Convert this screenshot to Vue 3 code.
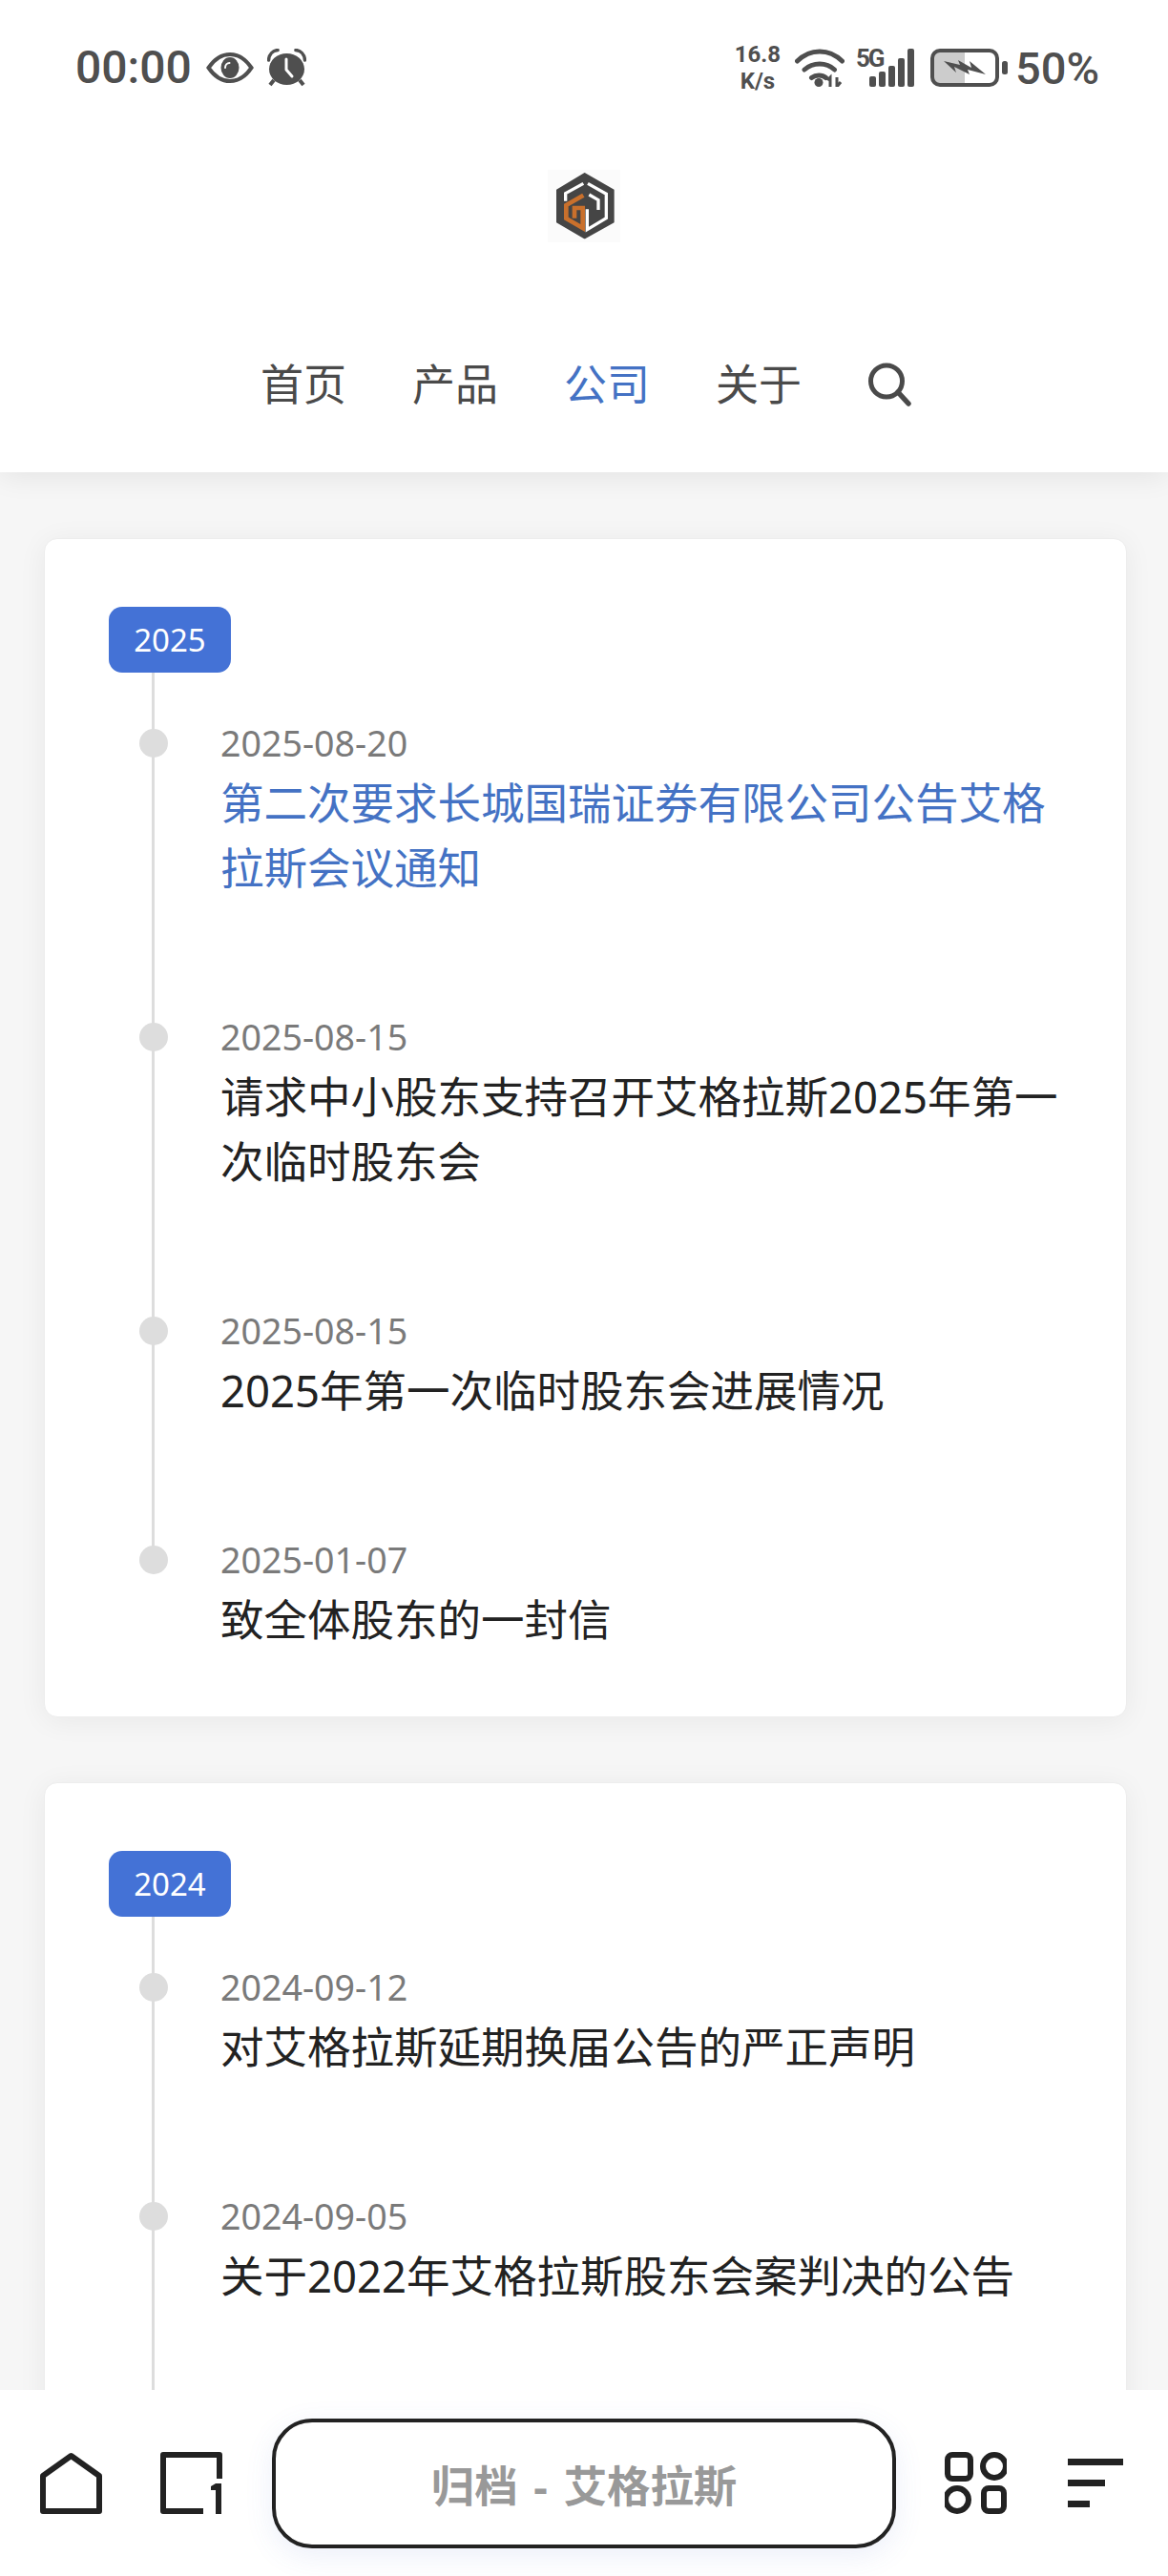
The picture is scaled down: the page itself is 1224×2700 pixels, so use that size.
<template>
  <div class="page">
    <header class="header">
      <div class="status">
        <div class="status-left">
          <span class="time">00:00</span>
          <svg class="eye" viewBox="0 0 50 32">
            <path d="M2.500 16C10 5 18 2 25 2s15 3 22.500 14C40 27 32 30 25 30S10 27 2.500 16Z" fill="none" stroke="#4f4f4f" stroke-width="4" />
            <ellipse cx="25" cy="16" rx="9.500" ry="11" fill="#4f4f4f" />
            <path d="M20 16c0-3 2-5 4.500-5" fill="none" stroke="#fff" stroke-width="2" stroke-linecap="round" />
          </svg>
          <svg class="alarm" viewBox="0 0 41 40">
            <ellipse cx="20.500" cy="21.500" rx="18.500" ry="16.500" fill="#4f4f4f" />
            <path d="M20 11v11l6 7" fill="none" stroke="#fff" stroke-width="3" stroke-linecap="round" stroke-linejoin="round" />
            <path d="M1.500 12C2 6 6 2 11 1.500M39.500 12C39 6 35 2 30 1.500" fill="none" stroke="#4f4f4f" stroke-width="3.500" stroke-linecap="round" />
            <path d="M7 33l-4 5M34 33l4 5" fill="none" stroke="#4f4f4f" stroke-width="4" />
          </svg>
        </div>
        <div class="status-right">
          <div class="speed">16.8<br />K/s</div>
          <svg class="wifi" viewBox="0 0 52 40">
            <path d="M2.500 13C16-.5 36-.5 49.500 13M10 22c9-8 23-8 31.500 0M17.500 30.500c4.500-3.500 11-3.500 15 0" fill="none" stroke="#4f4f4f" stroke-width="5" stroke-linecap="round" />
            <circle cx="25" cy="35.500" r="4.500" fill="#4f4f4f" />
            <path d="M37 40V30l-3 3M44 30v10l4-5" fill="none" stroke="#4f4f4f" stroke-width="3" />
          </svg>
          <div class="signal">
            <span class="five-g">5G</span>
            <svg class="bars" viewBox="0 0 47 40">
              <rect v-for="bar in signalBars" :key="bar.x" :x="bar.x" :y="bar.y" width="7" :height="40 - bar.y" rx="2" fill="#4f4f4f" />
            </svg>
          </div>
          <svg class="battery" viewBox="0 0 81 40">
            <path d="M8 3h28v34H8a6 6 0 0 1-6-6V9a6 6 0 0 1 6-6Z" fill="#cccccc" />
            <rect x="2" y="2" width="68" height="36" rx="8" fill="none" stroke="#4f4f4f" stroke-width="4" />
            <rect x="75" y="13" width="6" height="14" rx="2.500" fill="#4f4f4f" />
            <polygon points="14,13 31,17 29,12 43,20 41,13 58,27 39,22 41,27 25,19 27,25" fill="#4f4f4f" />
          </svg>
          <span class="percent">50%</span>
        </div>
      </div>

      <div class="logo">
        <svg viewBox="0 0 240 240" width="80" height="80">
          <rect x="6" y="6" width="228" height="228" fill="#fbfbfb" />
          <path d="M122 18L212 70V170L122 220L36 170V70Z" fill="#454545" stroke="#454545" stroke-width="6" stroke-linejoin="round" />
          <path d="M62 104V80L118 49M132 49L190 82V158L130 194V130M136 84L165 101V132" fill="none" stroke="#fff" stroke-width="10" />
          <path d="M118 86L64 117V159L116 189V126H90V158" fill="none" stroke="#c9702c" stroke-width="14" />
        </svg>
      </div>

      <nav class="nav">
        <a v-for="link in links" :key="link.label" class="nav-link" :class="{ active: link.active }">{{ link.label }}</a>
        <svg class="search" viewBox="0 0 46 46">
          <circle cx="20" cy="19.500" r="16.500" fill="none" stroke="#4a4a4a" stroke-width="5" />
          <path d="M32 31l11 12" fill="none" stroke="#4a4a4a" stroke-width="5.500" stroke-linecap="round" />
        </svg>
      </nav>
    </header>

    <main class="main">
      <section v-for="group in archive" :key="group.year" class="card">
        <div class="year">{{ group.year }}</div>
        <ul class="list" :class="{ cut: group.cut }">
          <li v-for="post in group.posts" :key="post.title" class="item">
            <span class="dot" />
            <div class="date">{{ post.date }}</div>
            <div class="title" :class="{ active: post.active }">{{ post.title }}</div>
          </li>
        </ul>
      </section>
    </main>

    <footer class="bar">
      <svg class="bar-icon" viewBox="0 0 65 65">
        <path d="M32.500 4L62 25v37H3V25Z" fill="none" stroke="#222" stroke-width="6" stroke-linejoin="round" />
      </svg>
      <svg class="bar-icon doc" viewBox="0 0 65 65">
        <path d="M62 28V3H3v59h42" fill="none" stroke="#222" stroke-width="6" stroke-linejoin="round" />
        <path d="M58 33h6v32h-6V40h-5v-4Z" fill="#222" />
      </svg>
      <div class="pill">归档 - 艾格拉斯</div>
      <svg class="bar-icon grid" viewBox="0 0 65 65">
        <rect x="3" y="3" width="24" height="25" rx="5" fill="none" stroke="#222" stroke-width="6" />
        <circle cx="52" cy="15" r="12" fill="none" stroke="#222" stroke-width="6" />
        <circle cx="13" cy="50" r="12" fill="none" stroke="#222" stroke-width="6" />
        <rect x="41" y="38" width="21" height="24" rx="5" fill="none" stroke="#222" stroke-width="6" />
      </svg>
      <div class="menu">
        <span class="menu-long" />
        <span class="menu-mid" />
        <span class="menu-short" />
      </div>
    </footer>
  </div>
</template>

<script setup>
const links = [
  { label: '首页' },
  { label: '产品' },
  { label: '公司', active: true },
  { label: '关于' },
]

const signalBars = [
  { x: 0, y: 29 },
  { x: 10, y: 24 },
  { x: 20, y: 18 },
  { x: 30, y: 10 },
  { x: 40, y: 0 },
]

const archive = [
  {
    year: 2025,
    posts: [
      { date: '2025-08-20', title: '第二次要求长城国瑞证券有限公司公告艾格拉斯会议通知', active: true },
      { date: '2025-08-15', title: '请求中小股东支持召开艾格拉斯2025年第一次临时股东会' },
      { date: '2025-08-15', title: '2025年第一次临时股东会进展情况' },
      { date: '2025-01-07', title: '致全体股东的一封信' },
    ],
  },
  {
    year: 2024,
    cut: true,
    posts: [
      { date: '2024-09-12', title: '对艾格拉斯延期换届公告的严正声明' },
      { date: '2024-09-05', title: '关于2022年艾格拉斯股东会案判决的公告' },
    ],
  },
]
</script>

<style>
html,
body {
  background: #f6f6f6;
  margin: 0;
}
</style>

<style scoped>
* {
  box-sizing: border-box;
}

.page {
  background: #f6f6f6;
  color: #222;
  font-family: 'Noto Sans', 'Noto Sans CJK SC', sans-serif;
  height: 2700px;
  overflow: hidden;
  position: relative;
  width: 1224px;
}

.header {
  background: #fff;
  box-shadow: 0 2px 30px rgba(0, 0, 0, 0.09);
  height: 495px;
  position: relative;
}

.status {
  align-items: center;
  color: #4f4f4f;
  display: flex;
  font-family: Roboto, sans-serif;
  font-weight: 500;
  height: 142px;
  justify-content: space-between;
  padding: 0 72px 0 79px;
}

.status-left,
.status-right {
  align-items: center;
  display: flex;
}

.time {
  font-size: 48px;
  line-height: 1;
}

.eye {
  height: 32px;
  margin-left: 15px;
  width: 50px;
}

.alarm {
  height: 40px;
  margin-left: 14px;
  width: 41px;
}

.speed {
  font-size: 24px;
  font-weight: 700;
  line-height: 28px;
  text-align: center;
  width: 52px;
}

.wifi {
  height: 40px;
  margin-left: 13px;
  width: 52px;
}

.signal {
  height: 40px;
  margin-left: 12px;
  position: relative;
  width: 61px;
}

.five-g {
  font-size: 26px;
  font-weight: 700;
  left: 0;
  letter-spacing: -2px;
  line-height: 20px;
  position: absolute;
  top: 0;
}

.bars {
  bottom: 0;
  height: 40px;
  position: absolute;
  right: 0;
  width: 47px;
}

.battery {
  height: 40px;
  margin-left: 17px;
  width: 81px;
}

.percent {
  font-size: 47px;
  line-height: 1;
  margin-left: 8px;
}

.logo {
  display: flex;
  justify-content: center;
  margin-top: 34px;
}

.nav {
  align-items: center;
  display: flex;
  gap: 69px;
  justify-content: center;
  margin-top: 114px;
  padding-left: 4px;
}

.nav-link {
  color: #4a4a4a;
  font-size: 45px;
  line-height: 66px;
}

.nav-link.active {
  color: #4472c4;
}

.search {
  height: 46px;
  width: 46px;
}

.main {
  display: flex;
  flex-direction: column;
  gap: 68px;
  padding: 69px 43px 0 46px;
}

.card {
  background: #fff;
  border: 1px solid #ededed;
  border-radius: 14px;
  box-shadow: 0 4px 30px rgba(0, 0, 0, 0.06);
  padding: 71px 67px 68px;
}

.year {
  background: #4472d6;
  border-radius: 14px;
  color: #fff;
  font-size: 33px;
  height: 69px;
  line-height: 69px;
  text-align: center;
  width: 128px;
}

.list {
  list-style: none;
  margin: 0;
  padding: 48px 0 0;
  position: relative;
}

/* Rail joining the year badge to the last dot. */
.list::before {
  background: #ddd;
  bottom: 96px;
  content: '';
  left: 45px;
  position: absolute;
  top: 0;
  width: 3px;
}

.list.cut::before {
  bottom: 0;
}

.list.cut {
  padding-bottom: 300px;
}

.item {
  padding: 0 0 118px 117px;
  position: relative;
}

.item:last-child {
  padding-bottom: 0;
}

.dot {
  background: #ddd;
  border-radius: 50%;
  height: 30px;
  left: 32px;
  position: absolute;
  top: 11px;
  width: 30px;
}

.date {
  color: #7a7a7a;
  font-size: 37.600px;
  line-height: 52px;
}

.title {
  color: #222;
  font-size: 45.500px;
  line-height: 68px;
  margin-top: 2px;
}

.title.active {
  color: #4472c4;
}

.bar {
  align-items: center;
  background: #fff;
  bottom: 0;
  display: flex;
  height: 195px;
  left: 0;
  padding: 0 48px 0 42px;
  position: absolute;
  right: 0;
}

.bar-icon {
  flex: none;
  height: 65px;
  width: 65px;
}

.doc {
  margin-left: 61px;
}

.pill {
  align-items: center;
  background: #fff;
  border: 4px solid #222;
  border-radius: 42px;
  box-shadow: 0 8px 30px rgba(70, 100, 200, 0.1);
  color: #999;
  display: flex;
  flex: none;
  font-size: 45.400px;
  font-weight: 700;
  height: 136px;
  justify-content: center;
  margin-left: 52px;
  white-space: pre;
  width: 654px;
  word-spacing: 5px;
}

.grid {
  margin-left: 51px;
}

.menu {
  display: flex;
  flex-direction: column;
  gap: 15px;
  margin-left: 64px;
}

.menu span {
  background: #222;
  display: block;
  height: 7px;
}

.menu-long {
  width: 58px;
}

.menu-mid {
  width: 39px;
}

.menu-short {
  width: 23px;
}
</style>
